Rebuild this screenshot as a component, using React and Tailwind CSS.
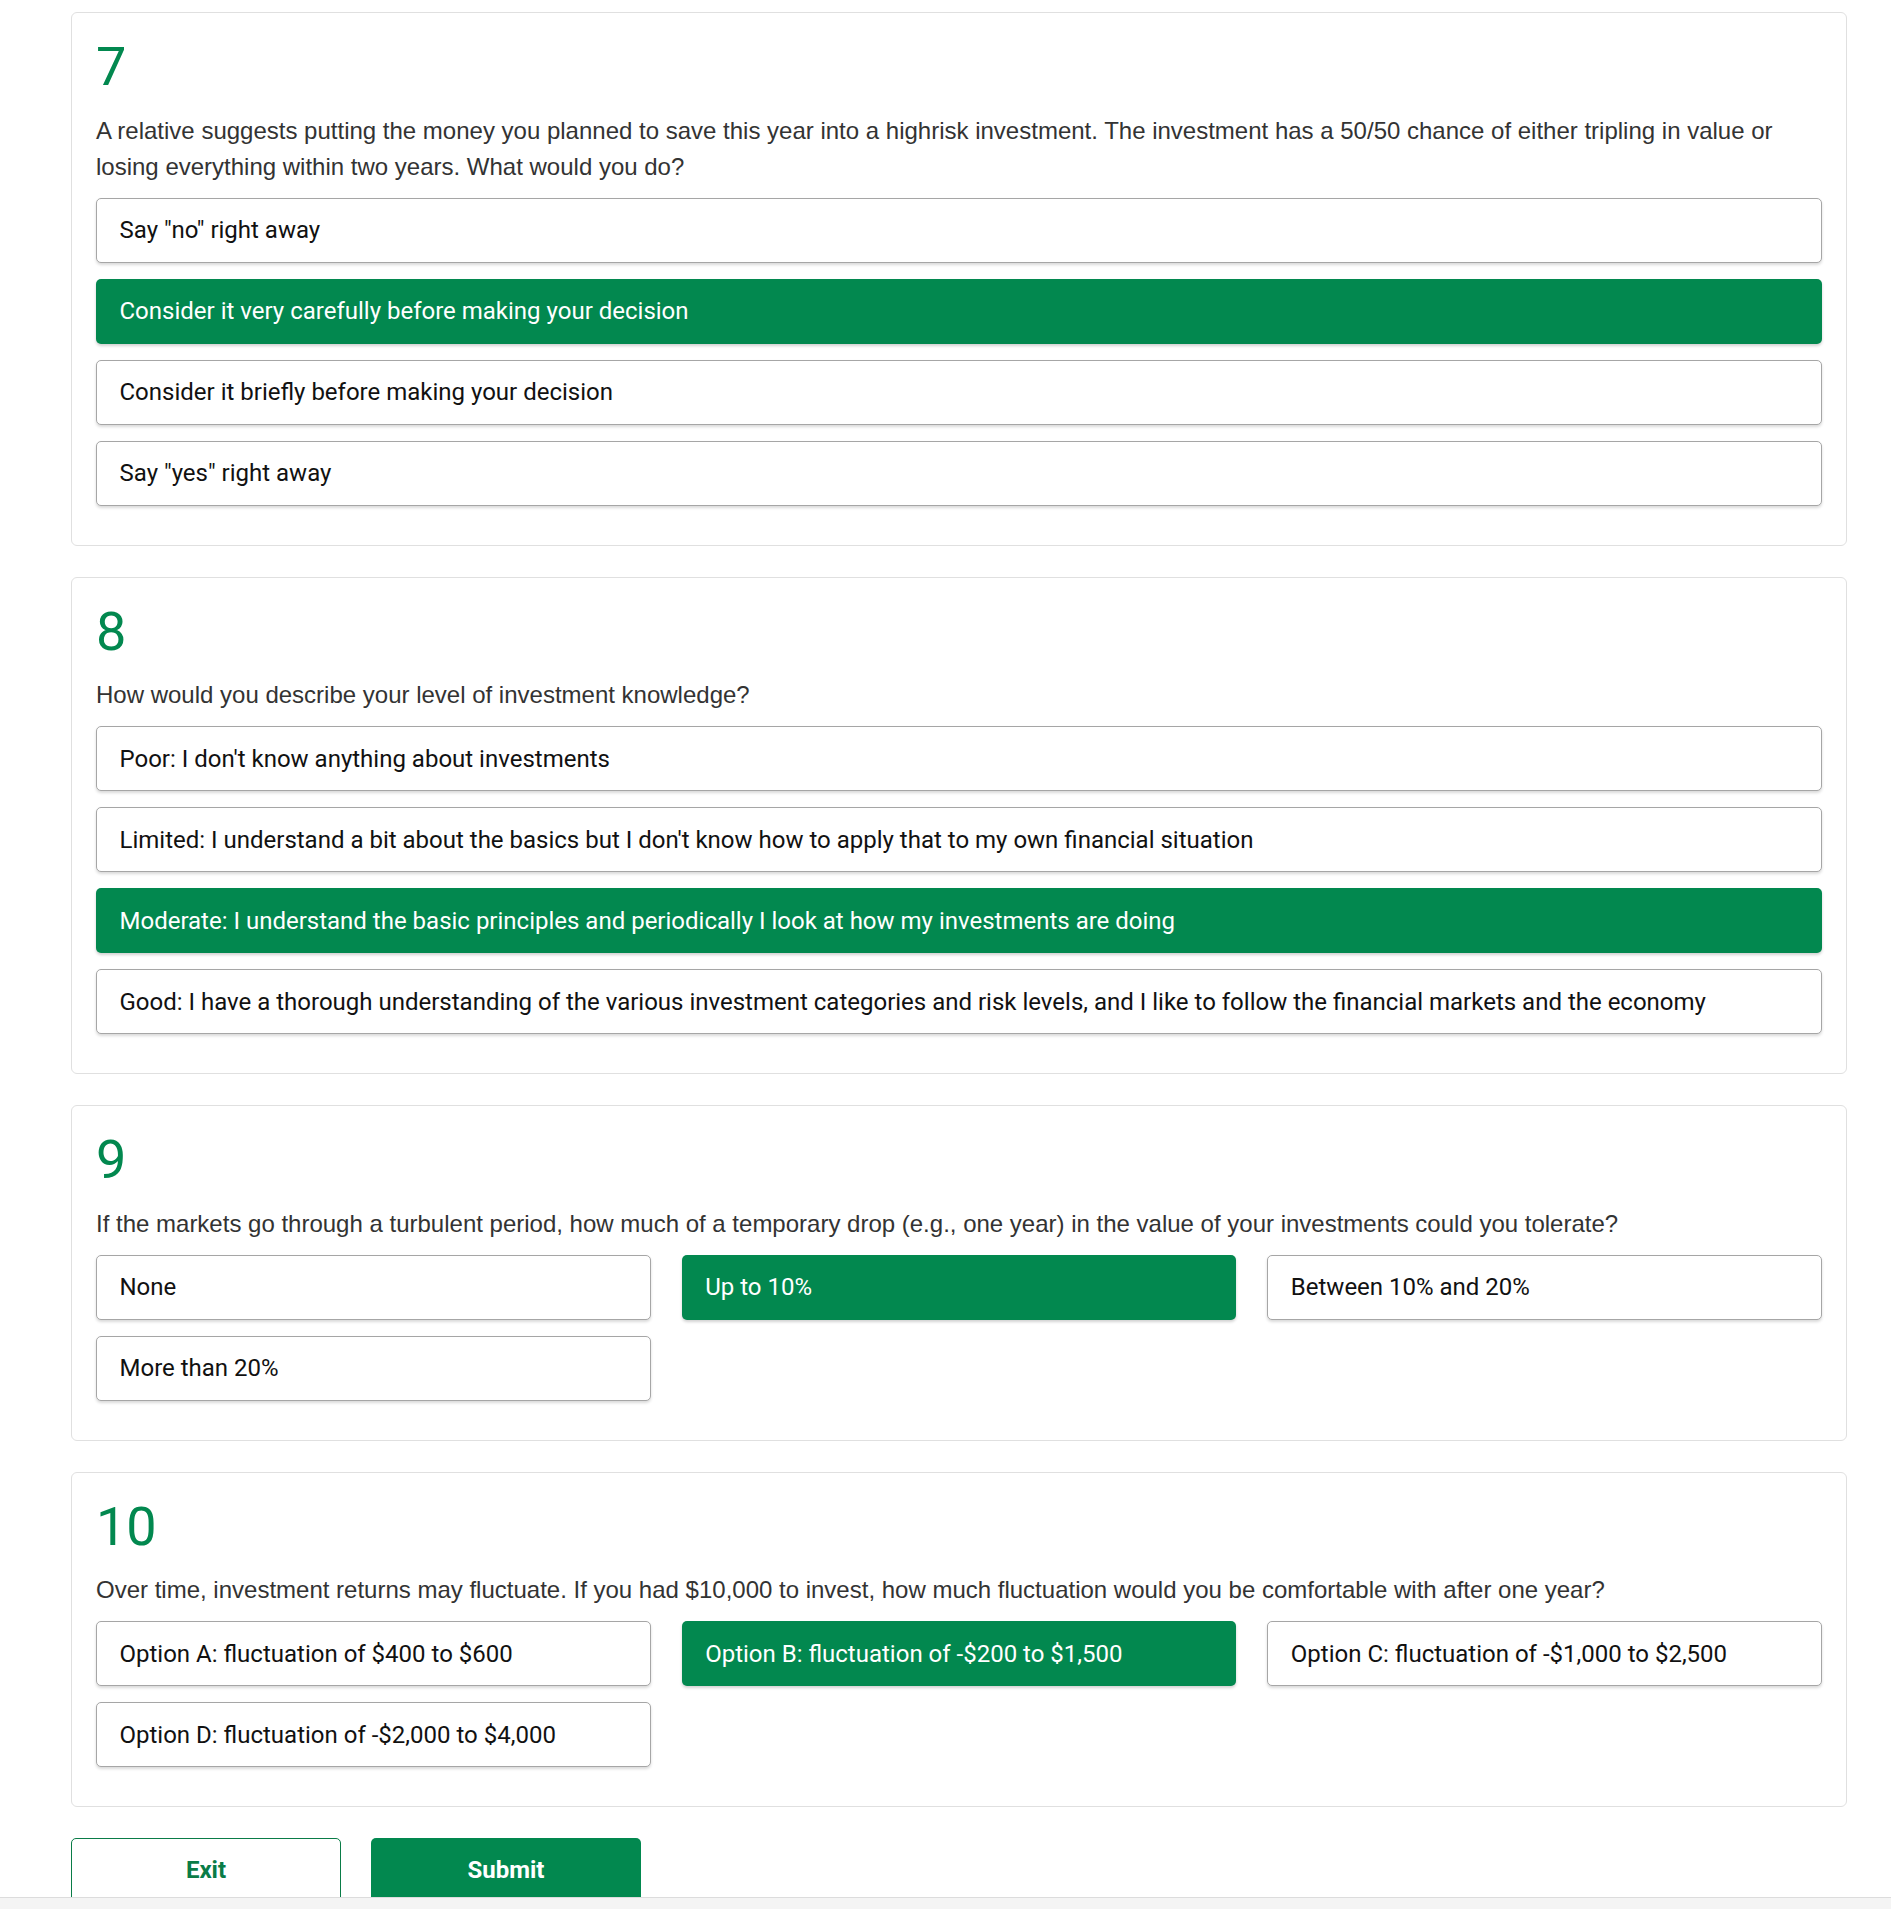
import React from "react";

const questions = [
  {
    n: "7",
    text: "A relative suggests putting the money you planned to save this year into a highrisk investment. The investment has a 50/50 chance of either tripling in value or losing everything within two years. What would you do?",
    cols: 1,
    selected: 1,
    options: [
      'Say "no" right away',
      "Consider it very carefully before making your decision",
      "Consider it briefly before making your decision",
      'Say "yes" right away',
    ],
  },
  {
    n: "8",
    text: "How would you describe your level of investment knowledge?",
    cols: 1,
    selected: 2,
    options: [
      "Poor: I don't know anything about investments",
      "Limited: I understand a bit about the basics but I don't know how to apply that to my own financial situation",
      "Moderate: I understand the basic principles and periodically I look at how my investments are doing",
      "Good: I have a thorough understanding of the various investment categories and risk levels, and I like to follow the financial markets and the economy",
    ],
  },
  {
    n: "9",
    text: "If the markets go through a turbulent period, how much of a temporary drop (e.g., one year) in the value of your investments could you tolerate?",
    cols: 3,
    selected: 1,
    options: ["None", "Up to 10%", "Between 10% and 20%", "More than 20%"],
  },
  {
    n: "10",
    text: "Over time, investment returns may fluctuate. If you had $10,000 to invest, how much fluctuation would you be comfortable with after one year?",
    cols: 3,
    selected: 1,
    options: [
      "Option A: fluctuation of $400 to $600",
      "Option B: fluctuation of -$200 to $1,500",
      "Option C: fluctuation of -$1,000 to $2,500",
      "Option D: fluctuation of -$2,000 to $4,000",
    ],
  },
];

function Option({ label, selected }) {
  return (
    <div
      className={
        selected
          ? "h-[65px] flex items-center pl-[23.5px] pr-4 rounded-[5px] bg-[#02884f] text-white shadow-[0_2px_3px_rgba(0,0,0,0.18)] text-[24px] whitespace-nowrap"
          : "h-[65px] flex items-center pl-[22.5px] pr-4 rounded-[5px] border border-[#a6a6a6] bg-white text-[#111] shadow-[0_2px_3px_rgba(0,0,0,0.15)] text-[24px] whitespace-nowrap"
      }
      style={{ fontFamily: "Roboto, 'Noto Sans', sans-serif" }}
    >
      {label}
    </div>
  );
}

function Card({ q }) {
  return (
    <div className="rounded-[6px] border border-[#e0e0e0] bg-white px-[24px] pt-[24px] pb-[39px]">
      <div
        className="text-[54px] leading-[59px] text-[#02884f] mb-[16.5px]"
        style={{ fontFamily: "Roboto, sans-serif" }}
      >
        {q.n}
      </div>
      <p
        className="text-[24px] leading-[36px] text-[#333] mb-[13px]"
        style={{ fontFamily: "'Liberation Sans', Arial, sans-serif" }}
      >
        {q.text}
      </p>
      <div
        className={
          q.cols === 3
            ? "grid grid-cols-3 gap-x-[31px] gap-y-[16px]"
            : "flex flex-col gap-[16px]"
        }
      >
        {q.options.map((o, i) => (
          <Option key={i} label={o} selected={i === q.selected} />
        ))}
      </div>
    </div>
  );
}

export default function App() {
  return (
    <div className="h-[1909px] w-full flex flex-col bg-white overflow-hidden">
      <div className="flex-1 overflow-hidden pl-[71px] pr-[44px] pt-[12px]">
        <div className="flex flex-col gap-[31px]">
          {questions.map((q) => (
            <Card key={q.n} q={q} />
          ))}
        </div>
        <div
          className="flex gap-[30px] mt-[31px]"
          style={{ fontFamily: "Roboto, sans-serif" }}
        >
          <button className="w-[270px] h-[64px] rounded-[5px] border border-[#0a7c47] bg-white text-[#0a7c47] font-bold text-[24px]">
            Exit
          </button>
          <button className="w-[270px] h-[64px] rounded-[5px] bg-[#02884f] text-white font-bold text-[24px]">
            Submit
          </button>
        </div>
      </div>
      <div className="h-[12px] shrink-0 border-t border-[#dcdcdc] bg-[#f4f4f4]" />
    </div>
  );
}
